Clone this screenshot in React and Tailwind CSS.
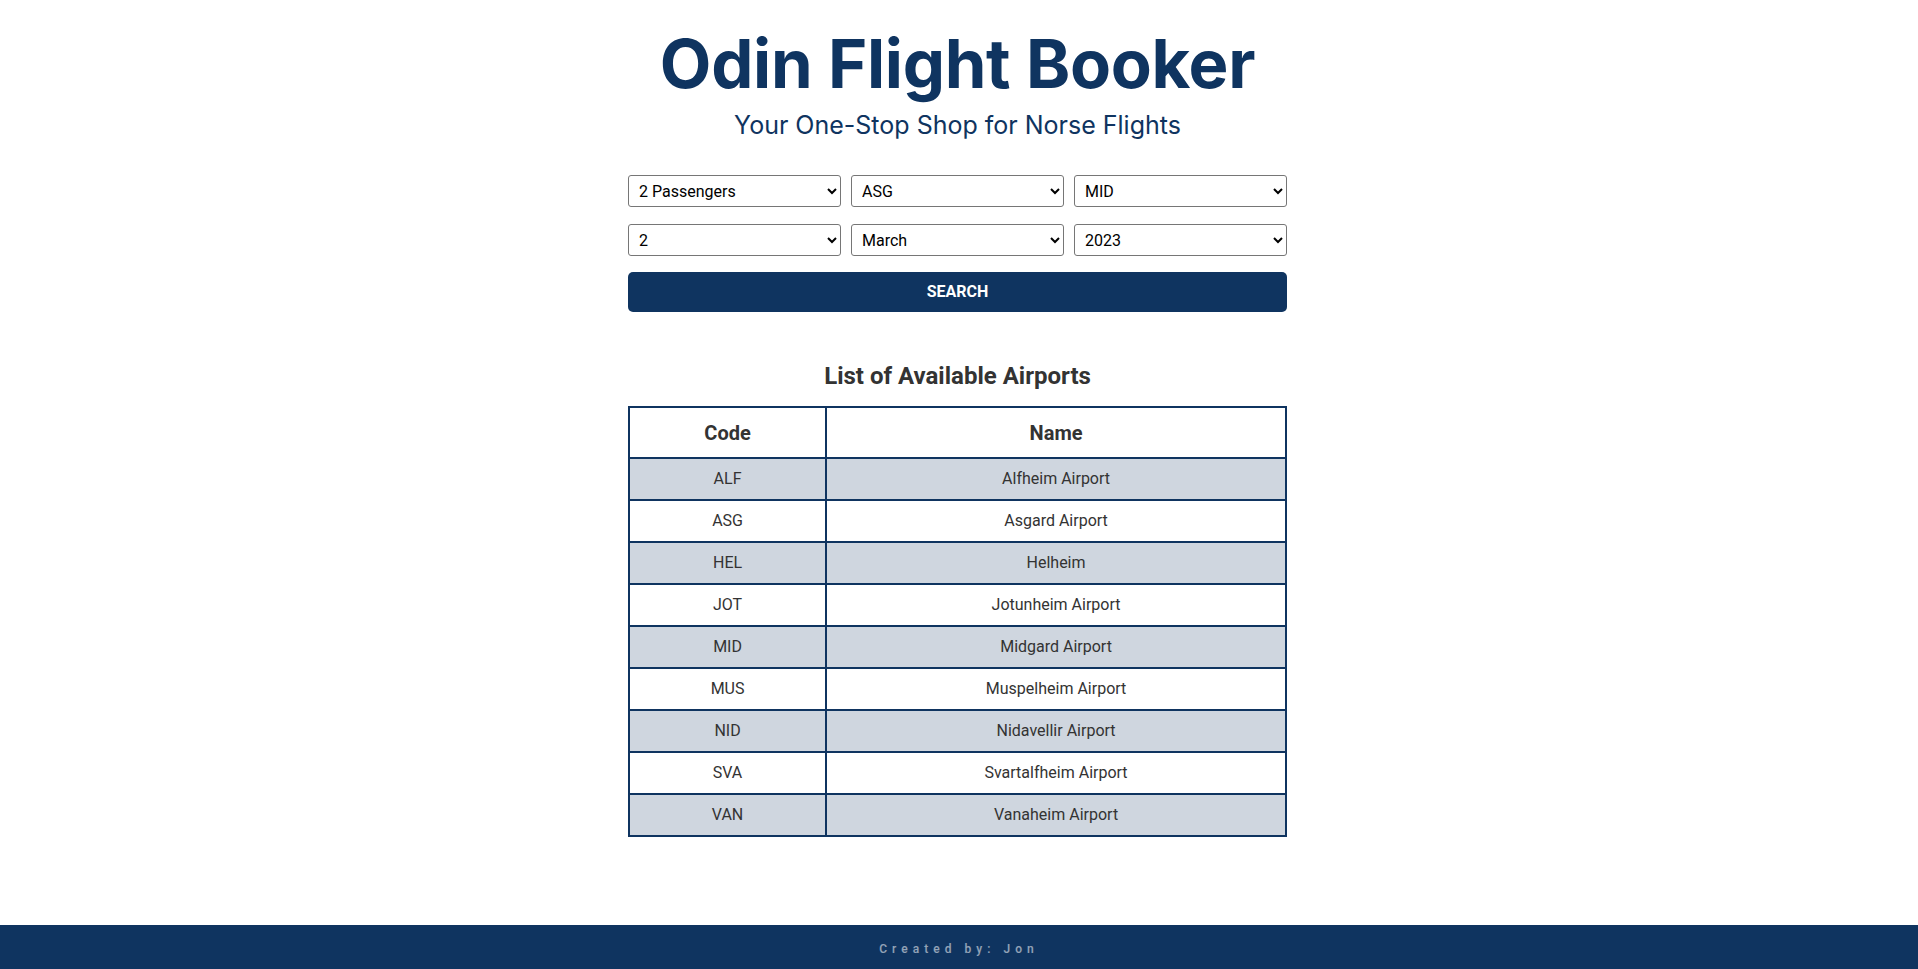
import { useState } from 'react';

const airports = [
  { code: 'ALF', name: 'Alfheim Airport' },
  { code: 'ASG', name: 'Asgard Airport' },
  { code: 'HEL', name: 'Helheim' },
  { code: 'JOT', name: 'Jotunheim Airport' },
  { code: 'MID', name: 'Midgard Airport' },
  { code: 'MUS', name: 'Muspelheim Airport' },
  { code: 'NID', name: 'Nidavellir Airport' },
  { code: 'SVA', name: 'Svartalfheim Airport' },
  { code: 'VAN', name: 'Vanaheim Airport' },
];

const months = ['January', 'February', 'March', 'April', 'May', 'June', 'July', 'August', 'September', 'October', 'November', 'December'];

export default function App() {
  const [passengers, setPassengers] = useState('2');
  const [from, setFrom] = useState('ASG');
  const [to, setTo] = useState('MID');
  const [day, setDay] = useState('2');
  const [month, setMonth] = useState('March');
  const [year, setYear] = useState('2023');

  const selectClass = 'h-8 w-full border border-[#767676] rounded-[3px] bg-white pl-[6px] pr-1 text-[16px] text-black';

  return (
    <div className="min-h-screen flex flex-col bg-white font-['Roboto',sans-serif] text-[#333]">
      <main className="flex-1 flex flex-col items-center pr-[3px]">
        {/* Header */}
        <h1 className="mt-[30px] h-[68px] font-['Inter',sans-serif] text-[67px] font-bold leading-[68px] tracking-[-0.3px] text-[#0f3460]">
          Odin Flight Booker
        </h1>
        <p className="mt-[15px] font-['Inter',sans-serif] text-[25px] leading-none text-[#0f3460]">
          Your One-Stop Shop for Norse Flights
        </p>

        {/* Search Form */}
        <form className="mt-[37px] w-[659px]" onSubmit={(e) => e.preventDefault()}>
          <div className="grid grid-cols-3 gap-x-[10px] gap-y-[17px]">
            <select className={selectClass} value={passengers} onChange={(e) => setPassengers(e.target.value)}>
              {[1, 2, 3, 4].map((n) => (
                <option key={n} value={n}>{n} {n === 1 ? 'Passenger' : 'Passengers'}</option>
              ))}
            </select>
            <select className={selectClass} value={from} onChange={(e) => setFrom(e.target.value)}>
              {airports.map((a) => <option key={a.code} value={a.code}>{a.code}</option>)}
            </select>
            <select className={selectClass} value={to} onChange={(e) => setTo(e.target.value)}>
              {airports.map((a) => <option key={a.code} value={a.code}>{a.code}</option>)}
            </select>
            <select className={selectClass} value={day} onChange={(e) => setDay(e.target.value)}>
              {Array.from({ length: 31 }, (_, i) => i + 1).map((d) => (
                <option key={d} value={d}>{d}</option>
              ))}
            </select>
            <select className={selectClass} value={month} onChange={(e) => setMonth(e.target.value)}>
              {months.map((m) => <option key={m} value={m}>{m}</option>)}
            </select>
            <select className={selectClass} value={year} onChange={(e) => setYear(e.target.value)}>
              {['2023', '2024'].map((y) => <option key={y} value={y}>{y}</option>)}
            </select>
          </div>
          <button
            type="submit"
            className="mt-[16px] h-10 w-full rounded-[5px] bg-[#0f3460] text-[16px] font-bold uppercase text-white"
          >
            Search
          </button>
        </form>

        {/* Airports */}
        <h2 className="mt-[52px] text-[24px] font-bold leading-none text-[#333]">List of Available Airports</h2>
        <table className="mt-[18px] w-[659px] border-collapse border-2 border-[#0f3460] text-center">
          <thead>
            <tr className="h-[51px]">
              <th className="w-[30%] border-2 border-[#0f3460] text-[20px] font-bold">Code</th>
              <th className="border-2 border-[#0f3460] text-[20px] font-bold">Name</th>
            </tr>
          </thead>
          <tbody>
            {airports.map((a, i) => (
              <tr key={a.code} className={`h-[42px] ${i % 2 === 0 ? 'bg-[#cfd6df]' : 'bg-white'}`}>
                <td className="border-2 border-[#0f3460] text-[16px]">{a.code}</td>
                <td className="border-2 border-[#0f3460] text-[16px]">{a.name}</td>
              </tr>
            ))}
          </tbody>
        </table>
      </main>

      <footer className="flex h-[44px] items-center justify-center bg-[#0f3460] pt-[4px] text-[12px] font-medium tracking-[0.42em] text-white/55">
        Created by: Jon
      </footer>
    </div>
  );
}
